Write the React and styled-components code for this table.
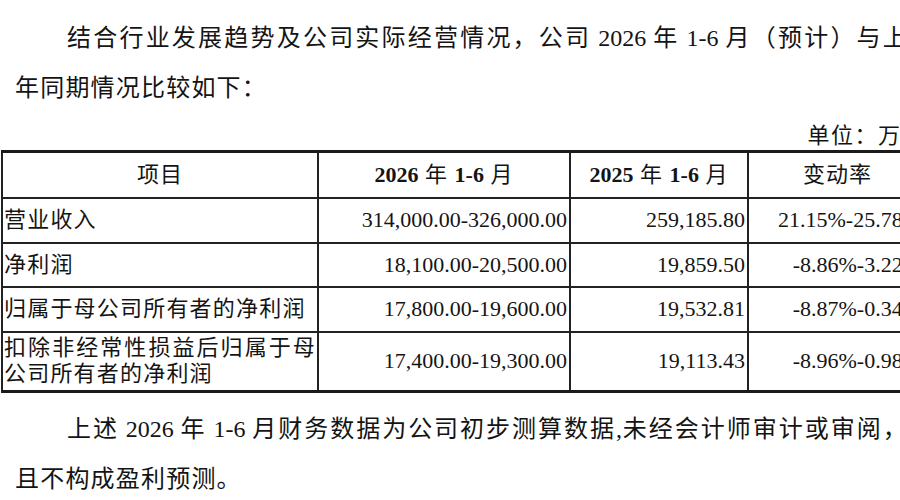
import React from "react";
import styled, { createGlobalStyle } from "styled-components";

const Global = createGlobalStyle`
  html, body { margin: 0; padding: 0; background: #fff; overflow: hidden; }
  body { width: 900px; height: 500px; }
`;

const Page = styled.div`
  width: 930px;
  padding: 13px 0 0 1px;
  font-family: "Liberation Serif", "Noto Sans CJK SC", serif;
  color: #141414;
`;

const Line = styled.div`
  width: 893px;
  margin-left: 14px;
  margin-top: ${(p) => p.$mt || 0}px;
  height: 50px;
  line-height: 50px;
  font-size: 24px;
  letter-spacing: 1.2px;
  text-indent: ${(p) => (p.$indent ? "52px" : "0")};
  text-align: ${(p) => (p.$justify ? "justify" : "left")};
  text-align-last: ${(p) => (p.$justify ? "justify" : "auto")};
  overflow: hidden;
`;

const Latin = styled.span`
  letter-spacing: 0;
`;

const Unit = styled.div`
  width: 924px;
  margin-top: 10px;
  height: 26px;
  line-height: 26px;
  font-size: 22px;
  letter-spacing: 1.5px;
  text-align: right;
`;

const Table = styled.table`
  width: 925px;
  margin-top: 1px;
  border-collapse: collapse;
  table-layout: fixed;
  font-size: 22px;
  border-top: 3px solid #1a1a1a;
  border-bottom: 3px solid #1a1a1a;
  border-left: 2px solid #1a1a1a;
`;

const Row = styled.tr`
  height: ${(p) => p.$h}px;
`;

const Head = styled.th`
  border: 2px solid #222;
  padding: 0;
  text-align: center;
  vertical-align: middle;
  font-weight: 400;
  line-height: 26px;
  letter-spacing: 1px;
`;

const Bold = styled.span`
  font-weight: 700;
  letter-spacing: 0;
`;

const Label = styled.td`
  border: 2px solid #222;
  padding: 0 1px 0 1px;
  text-align: justify;
  vertical-align: middle;
  line-height: 26px;
  letter-spacing: 1.2px;
`;

const Num = styled.td`
  border: 2px solid #222;
  padding: 0 ${(p) => p.$pr}px 0 0;
  text-align: right;
  vertical-align: middle;
  line-height: 26px;
  white-space: nowrap;
`;

const rows = [
  ["营业收入", "314,000.00-326,000.00", "259,185.80", "21.15%-25.78%", 45],
  ["净利润", "18,100.00-20,500.00", "19,859.50", "-8.86%-3.22%", 44],
  ["归属于母公司所有者的净利润", "17,800.00-19,600.00", "19,532.81", "-8.87%-0.34%", 45],
  ["扣除非经常性损益后归属于母公司所有者的净利润", "17,400.00-19,300.00", "19,113.43", "-8.96%-0.98%", 60],
];

export default function App() {
  return (
    <Page>
      <Global />
      <Line $indent $justify>
        结合行业发展趋势及公司实际经营情况，公司<Latin> 2026 </Latin>年<Latin> 1-6 </Latin>月（预计）与上
      </Line>
      <Line>年同期情况比较如下：</Line>
      <Unit>单位：万元</Unit>
      <Table>
        <colgroup>
          <col style={{ width: 316 }} />
          <col style={{ width: 252 }} />
          <col style={{ width: 178 }} />
          <col style={{ width: 179 }} />
        </colgroup>
        <thead>
          <Row $h={46}>
            <Head>项目</Head>
            <Head>
              <Bold>2026</Bold> 年 <Bold>1-6</Bold> 月
            </Head>
            <Head>
              <Bold>2025</Bold> 年 <Bold>1-6</Bold> 月
            </Head>
            <Head>变动率</Head>
          </Row>
        </thead>
        <tbody>
          {rows.map(([label, a, b, c, h]) => (
            <Row key={label} $h={h}>
              <Label>{label}</Label>
              <Num $pr={2}>{a}</Num>
              <Num $pr={2}>{b}</Num>
              <Num $pr={5}>{c}</Num>
            </Row>
          ))}
        </tbody>
      </Table>
      <Line $indent $justify $mt={11}>
        上述<Latin> 2026 </Latin>年<Latin> 1-6 </Latin>月财务数据为公司初步测算数据<Latin>,</Latin>未经会计师审计或审阅，
      </Line>
      <Line>且不构成盈利预测。</Line>
    </Page>
  );
}
